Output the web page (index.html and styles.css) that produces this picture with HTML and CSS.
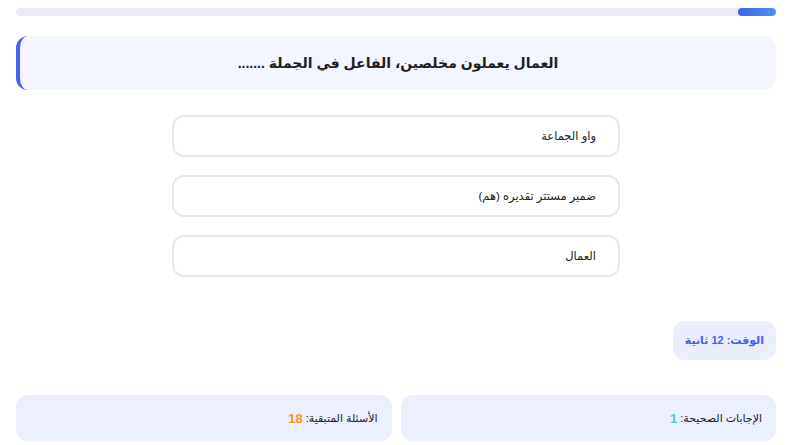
FILE: index.html
```html
<!DOCTYPE html>
<html lang="ar" dir="rtl">
<head>
<meta charset="utf-8">
<link rel="stylesheet" href="styles.css">
</head>
<body>
<div class="page">
  <div class="progress"><div class="progress-fill" style="width:5%"></div></div>
  <div class="question">العمال يعملون مخلصين، الفاعل في الجملة .......</div>
  <div class="options">
    <div class="option">واو الجماعة</div>
    <div class="option">ضمير مستتر تقديره (هم)</div>
    <div class="option">العمال</div>
  </div>
  <div class="timer-row"><div class="timer">الوقت: 12 ثانية</div></div>
  <div class="stats">
    <div class="stat">الإجابات الصحيحة: <span class="num correct">1</span></div>
    <div class="stat">الأسئلة المتبقية: <span class="num remaining">18</span></div>
  </div>
</div>
</body>
</html>
```
FILE: styles.css
```css
html, body {
  margin: 0;
  padding: 0;
  background: #ffffff;
}
body {
  font-family: "Liberation Sans", "DejaVu Sans", sans-serif;
  color: #222;
}
.page {
  padding: 8px 20px 0 16px;
}
.progress {
  height: 8px;
  background: #e8ebef;
  border-radius: 4px;
  overflow: hidden;
}
.progress-fill {
  height: 100%;
  border-radius: 4px;
  background: linear-gradient(to right, #4361ee, #4895ef);
}
.question {
  margin-top: 20px;
  background: #f3f6fe;
  border-left: 4px solid #4361ee;
  border-radius: 12px;
  padding: 0 16px;
  height: 54px;
  display: flex;
  align-items: center;
  justify-content: center;
  font-weight: bold;
  font-size: 14px;
  color: #1f1f1f;
}
.options {
  width: 448px;
  margin: 25px auto 0;
  display: flex;
  flex-direction: column;
  gap: 18px;
}
.option {
  box-sizing: border-box;
  height: 42px;
  border: 2px solid #e6e8eb;
  border-radius: 12px;
  display: flex;
  align-items: center;
  padding: 0 22px;
  font-size: 11.5px;
  color: #222;
  background: #fff;
}
.timer-row {
  margin-top: 44px;
  display: flex;
}
.timer {
  background: #eaeefd;
  color: #4361ee;
  font-weight: bold;
  font-size: 11px;
  border-radius: 12px;
  height: 39px;
  padding: 0 12px;
  display: flex;
  align-items: center;
}
.stats {
  margin-top: 35px;
  display: grid;
  grid-template-columns: 1fr 1fr;
  gap: 9px;
}
.stat {
  background: #eceffc;
  border-radius: 12px;
  height: 46px;
  display: flex;
  align-items: center;
  padding: 0 14px;
  font-size: 11px;
  color: #222;
}
.num { font-weight: bold; font-size: 13px; margin-right: 3px; }
.correct { color: #4cc9f0; }
.remaining { color: #f8961e; }
```
